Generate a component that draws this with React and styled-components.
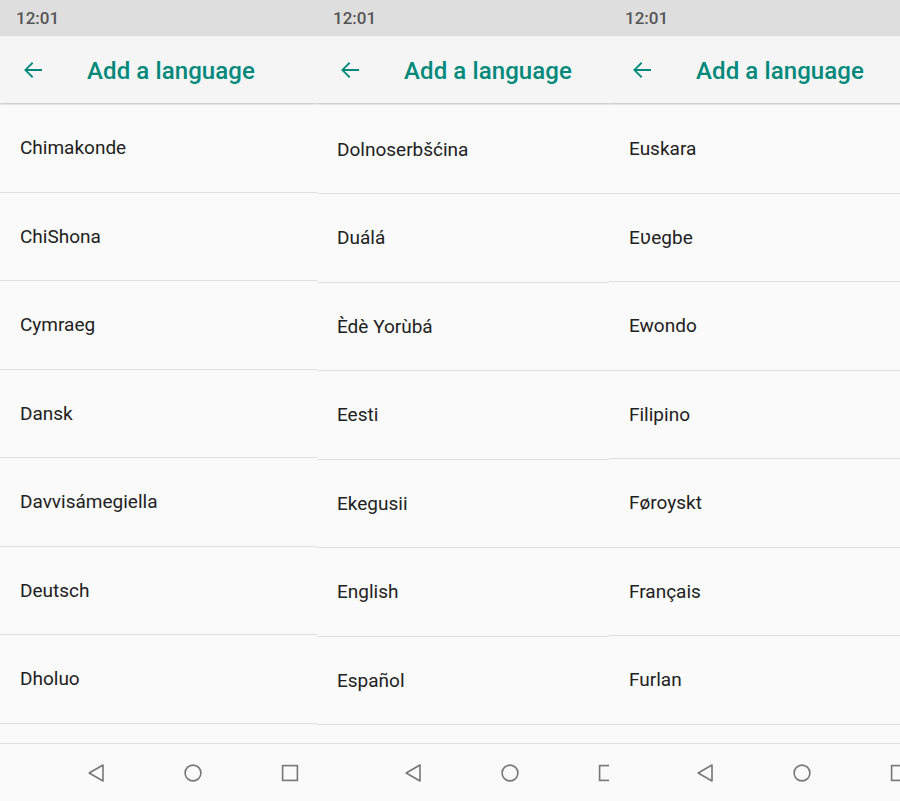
import React from 'react';
import styled, { createGlobalStyle } from 'styled-components';

const GlobalStyle = createGlobalStyle`
    html, body {
        margin: 0;
        padding: 0;
        background: #fafafa;
    }
    body {
        font-family: Roboto, "Noto Sans", "Liberation Sans", sans-serif;
        width: 900px;
        height: 801px;
        overflow: hidden;
    }
`;

const screens = [
    {
        width: 317,
        shift: 0,
        items: ['Chimakonde', 'ChiShona', 'Cymraeg', 'Dansk', 'Davvisámegiella', 'Deutsch', 'Dholuo', ''],
    },
    {
        width: 292,
        shift: 1.5,
        items: ['Dolnoserbšćina', 'Duálá', 'Èdè Yorùbá', 'Eesti', 'Ekegusii', 'English', 'Español', ''],
    },
    {
        width: 291,
        shift: 1,
        items: ['Euskara', 'Eʋegbe', 'Ewondo', 'Filipino', 'Føroyskt', 'Français', 'Furlan', ''],
    },
];

const BackArrow = () => (
    <svg width="24" height="24" viewBox="0 0 24 24">
        <path d="M21 11.1H6.6l5.7-5.7-1.3-1.3L3.1 12l7.9 7.9 1.3-1.3-5.7-5.7H21z" fill="#00897b" />
    </svg>
);

const NavBack = () => (
    <svg width="18" height="18" viewBox="0 0 18 18">
        <path d="M16 1v16L2.2 9z" fill="none" stroke="#777" strokeWidth="1.6" strokeLinejoin="round" />
    </svg>
);

const NavHome = () => (
    <svg width="18" height="18" viewBox="0 0 18 18">
        <circle cx="9" cy="9" r="7.9" fill="none" stroke="#777" strokeWidth="1.6" />
    </svg>
);

const NavRecent = () => (
    <svg width="18" height="18" viewBox="0 0 18 18">
        <rect x="1.6" y="1.6" width="14.8" height="14.8" fill="none" stroke="#777" strokeWidth="1.6" />
    </svg>
);

const Phone = ({ width, shift, items }) => (
    <Screen $width={width}>
        <Inner>
            <StatusBar>12:01</StatusBar>
            <AppBar>
                <BackButton><BackArrow /></BackButton>
                <Title>Add a language</Title>
            </AppBar>
            <List $shift={shift}>
                {items.map((name, i) => (
                    <Item key={i}>{name}</Item>
                ))}
            </List>
            <NavBar>
                <NavSlot><NavBack /></NavSlot>
                <NavSlot><NavHome /></NavSlot>
                <NavSlot><NavRecent /></NavSlot>
            </NavBar>
        </Inner>
    </Screen>
);

const App = () => (
    <>
        <GlobalStyle />
        <Row>
            {screens.map((s, i) => (
                <Phone key={i} {...s} />
            ))}
        </Row>
    </>
);

const Row = styled.div`
    display: flex;
    width: 900px;
    height: 801px;
`;

const Screen = styled.div`
    width: ${p => p.$width}px;
    flex: none;
    height: 801px;
    overflow: hidden;
`;

const Inner = styled.div`
    width: 317px;
    height: 801px;
    display: flex;
    flex-direction: column;
    background: #fafafa;
`;

const StatusBar = styled.div`
    height: 36px;
    flex: none;
    background: #dedede;
    color: #555;
    font-size: 17px;
    font-weight: 500;
    line-height: 37px;
    padding-left: 16px;
    box-sizing: border-box;
`;

const AppBar = styled.div`
    height: 67px;
    flex: none;
    display: flex;
    align-items: center;
    background: #f5f5f5;
    box-shadow: 0 1px 2px rgba(0, 0, 0, 0.25);
    position: relative;
    z-index: 1;
    box-sizing: border-box;
`;

const BackButton = styled.div`
    width: 24px;
    height: 24px;
    margin-left: 21px;
    margin-right: 42px;
    display: flex;
`;

const Title = styled.h1`
    margin: 0;
    font-size: 24px;
    font-weight: 500;
    color: #00897b;
    letter-spacing: 0.1px;
    line-height: 1;
    padding-top: 2px;
`;

const List = styled.div`
    flex: 1;
    overflow: hidden;
    padding-top: ${p => p.$shift}px;
    margin-top: 1px;
`;

const Item = styled.div`
    height: 87.5px;
    display: flex;
    align-items: center;
    padding-left: 20px;
    font-size: 19px;
    color: #212121;
    border-bottom: 1px solid #e0e0e0;
    background: #fafafa;
`;

const NavBar = styled.div`
    height: 57px;
    flex: none;
    display: flex;
    align-items: center;
    padding-left: 87px;
    gap: 79px;
    border-top: 1px solid #e0e0e0;
    background: #fafafa;
`;

const NavSlot = styled.div`
    width: 18px;
    height: 18px;
    display: flex;
    align-items: center;
    justify-content: center;
`;

export default App;
